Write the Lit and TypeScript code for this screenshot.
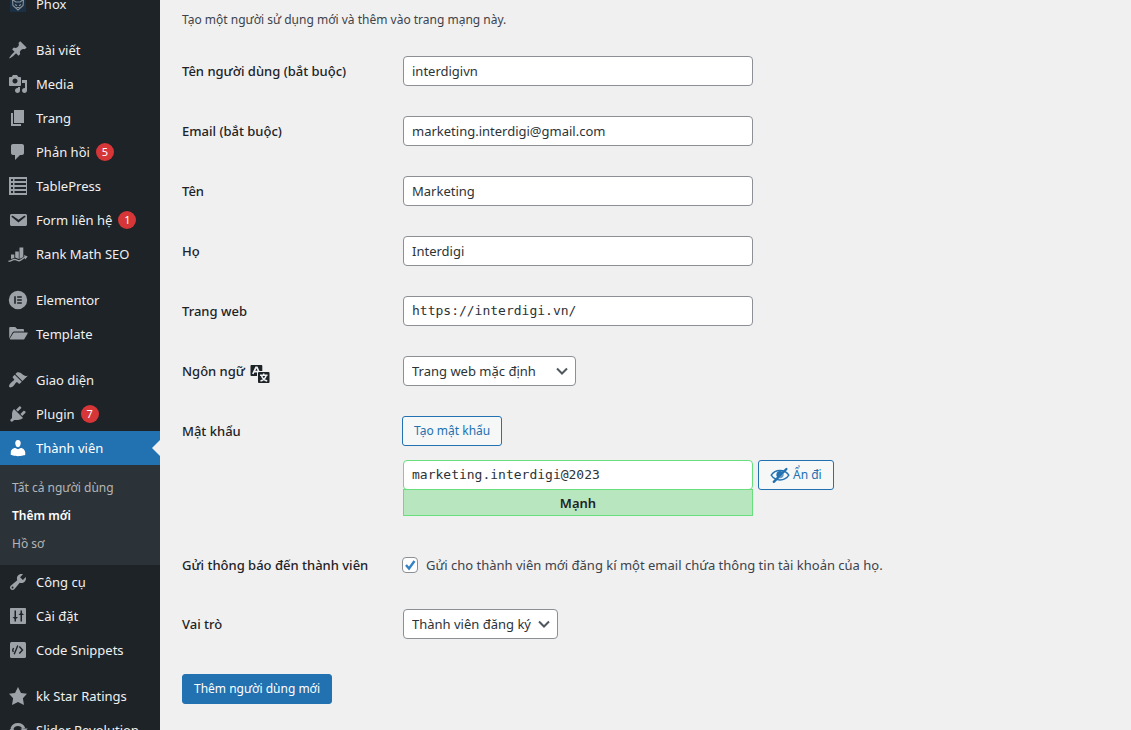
import { LitElement, html, css, svg, nothing } from "lit";
import { customElement, property } from "lit/decorators.js";
import { classMap } from "lit/directives/class-map.js";

const icons: Record<string, unknown> = {
  phox: svg`<rect x="2" y="2" width="16" height="16" fill="#1b3044"/><path fill="none" stroke="#8b9298" stroke-width="1.1" d="M4.5 5.5L7.8 8h4.4l3.3-2.5-.4 6L10 16l-5.100-4.500zM7 10.500l2 1.200M13 10.500l-2 1.200M8.500 13.500h3"/>`,
  pin: svg`<path d="M10.440 3.020l1.820-1.820 6.360 6.350-1.830 1.820c-1.050-.68-2.480-.57-3.410.36l-.75.75c-.92.93-1.040 2.350-.35 3.410l-1.830 1.820-2.410-2.410-2.800 2.790c-.42.42-3.380 2.710-3.800 2.290s1.860-3.390 2.280-3.810l2.790-2.790L4.100 9.360l1.830-1.820c1.050.69 2.480.57 3.400-.36l.75-.75c.93-.92 1.050-2.350.36-3.410z"/>`,
  media: svg`<path d="M13 11V4c0-.55-.45-1-1-1h-1.670L9 1H5L3.670 3H2c-.55 0-1 .45-1 1v7c0 .55.45 1 1 1h10c.55 0 1-.45 1-1zM7 4.500c1.380 0 2.500 1.120 2.500 2.500S8.380 9.500 7 9.500 4.500 8.380 4.500 7 5.620 4.500 7 4.500zM14 6h5v10.500c0 1.380-1.120 2.500-2.500 2.500S14 17.880 14 16.500s1.120-2.500 2.500-2.500c.17 0 .34.02.5.05V9h-3V6zm-4 8.050V13h2v3.500c0 1.380-1.120 2.500-2.500 2.500S7 17.880 7 16.500 8.120 14 9.500 14c.17 0 .34.02.5.05z"/>`,
  page: svg`<path d="M6 15V2h10v13H6zm-1 1h8v2H3V5h2v11z"/>`,
  comment: svg`<path d="M5 2h9c1.100 0 2 .9 2 2v7c0 1.100-.9 2-2 2h-2l-5 5v-5H5c-1.100 0-2-.9-2-2V4c0-1.100.9-2 2-2z"/>`,
  table: svg`<path fill-rule="evenodd" d="M1 1h18v18H1zM3 3v2h2V3zm3.500 0v2H18V3zM3 7v2h2V7zm3.500 0v2H18V7zM3 11v2h2v-2zm3.500 0v2H18v-2zM3 15v2h2v-2zm3.500 0v2H18v-2z"/>`,
  mail: svg`<path d="M3.870 4h13.250C18.370 4 19 4.590 19 5.790v8.420c0 1.190-.63 1.790-1.880 1.790H3.870c-1.250 0-1.880-.6-1.880-1.790V5.790c0-1.200.63-1.790 1.880-1.790zm6.620 8.600l6.740-5.530c.24-.2.43-.66.13-1.070-.29-.41-.82-.42-1.170-.17l-5.700 3.860L4.800 5.830c-.35-.25-.88-.24-1.170.17-.3.41-.11.87.13 1.070z"/>`,
  rank: svg`<path d="M3 10.500h3.300v3.600l-3.300 1zM7.200 7.500h3.600v7.500l-3.600-1.500zM11.500 3.500h3.800V13l-3.800 2z"/><path fill="none" stroke="currentColor" stroke-width="1.400" d="M.5 17.300c2.500-.2 4-1.800 6.200-1.900 1.800 0 2.800 1.400 4.600 1.300 2.400-.3 3.700-3.200 6.700-3.700"/><path d="M16 11l3.700 1.500-2.500 3z"/>`,
  elementor: svg`<path fill-rule="evenodd" d="M10 .8a9.200 9.200 0 1 0 0 18.400A9.200 9.200 0 0 0 10 .8zM6.200 6.200h1.600v7.600H6.200zm3 0h4.600v1.500H9.200zm0 3.050h4.600v1.500H9.200zm0 3.050h4.600v1.500H9.200z"/>`,
  folder: svg`<path d="M1.200 14.500V4.200c0-.7.500-1.200 1.200-1.200h4.800l2 2h5.600c.7 0 1.200.5 1.200 1.200V7.500H6.300c-.8 0-1.400.4-1.800 1z"/><path d="M6.400 8.500h12.700c.5 0 .8.5.5.9l-3.200 5.500c-.2.4-.6.6-1.100.6H2.400c-.5 0-.7-.5-.5-.9l3.400-5.500c.2-.4.6-.6 1.100-.6z"/>`,
  brush: svg`<path d="M14.480 11.060L7.410 3.990l1.500-1.500c.5-.56 2.300-.47 3.510.32 1.210.8 1.430 1.280 2.910 2.100 1.180.64 2.450 1.260 4.450.85zm-.71.71L6.700 4.700 4.930 6.470c-.39.39-.39 1.020 0 1.410l1.060 1.060c.39.39.39 1.030 0 1.420-.6.6-1.430 1.110-2.210 1.690-.35.26-.7.53-1.010.84C1.430 14.230.4 16.080 1.400 17.070c.99 1 2.840-.03 4.180-1.360.31-.31.58-.66.85-1.020.57-.78 1.080-1.610 1.690-2.210.39-.39 1.020-.39 1.410 0l1.060 1.060c.39.39 1.020.39 1.410 0z"/>`,
  plug: svg`<path d="M13.110 4.360L9.870 7.600 8 5.730l3.240-3.240c.35-.34 1.050-.2 1.560.32.52.51.66 1.210.31 1.550zm-8 1.770l.91-1.120 9.010 9.010-1.190.84c-.71.71-2.630 1.160-3.820 1.160H6.140L4.900 17.260c-.59.59-1.540.59-2.120 0-.59-.58-.59-1.530 0-2.120l1.240-1.240v-3.880c0-1.130.4-3.190 1.090-3.890zm7.260 3.970l3.240-3.240c.34-.35 1.040-.21 1.550.31.52.51.66 1.210.31 1.550l-3.240 3.250z"/>`,
  user: svg`<path d="M10 9.250c-2.270 0-2.730-3.440-2.730-3.440C7 4.020 7.820 2 9.970 2c2.160 0 2.980 2.020 2.710 3.810 0 0-.41 3.440-2.680 3.440z"/><path d="M7.230 10.050C4.700 10.050 2.760 12.280 2.760 14.530v2.490s3.590 1.130 7.240 1.130c3.590 0 7.240-1.130 7.240-1.130v-2.490c0-2.200-2.130-4.530-4.520-4.530L10 11.300z"/>`,
  wrench: svg`<path d="M16.680 9.770c-1.340 1.340-3.300 1.670-4.950.99l-5.410 6.520c-.99.99-2.590.99-3.580 0s-.99-2.590 0-3.570l6.520-5.420c-.68-1.650-.35-3.610.99-4.950 1.280-1.280 3.120-1.620 4.720-1.060l-2.890 2.890 2.820 2.820 2.860-2.870c.53 1.580.18 3.390-1.080 4.650zM3.810 16.210c.4.39 1.040.39 1.430 0 .4-.4.4-1.040 0-1.430-.39-.4-1.030-.4-1.430 0-.39.39-.39 1.030 0 1.430z"/>`,
  settings: svg`<path fill-rule="evenodd" d="M18 17V3c0-.55-.45-1-1-1H3c-.55 0-1 .45-1 1v14c0 .55.45 1 1 1h14c.55 0 1-.45 1-1zM6.500 4.500h1.500V11h2l-2 2v2.500H6.500V13l-2-2h2zM12.500 4.500H14V7l2 2h-2v6.500h-1.500V9h-2l2-2z"/>`,
  code: svg`<rect x="2" y="2" width="16" height="16" rx="1.500"/><path fill="none" stroke="#1d2327" stroke-width="1.400" d="M9.800 5.500L6.200 14.300M11.300 6.500l3.200 3.500-3.200 3.500M5.600 8l-.9 2 .6 2"/>`,
  star: svg`<path d="M10 1l3 6 6 .75-4.120 4.620L16 19l-6-3-6 3 1.130-6.630L1 7.750 7 7z"/>`,
  update: svg`<path fill="none" stroke="currentColor" stroke-width="3" d="M4 8.500a6.300 6.300 0 0 1 11.800 0M16 11.500a6.300 6.300 0 0 1-11.800 0"/><path d="M12.500 8.500h7.200l-3.600 4.300zM.3 11.500h7.200L3.900 7.200z"/>`,
  hidden: svg`<path fill="none" stroke="currentColor" stroke-width="1.400" d="M1.200 10.200C3.300 7 6.300 5.500 10 5.500s6.800 1.500 8.800 4.700c-2 3.200-5.100 4.800-8.800 4.800s-6.700-1.600-8.800-4.800z"/><path d="M6.300 9.700A3.700 3.700 0 0 1 12.600 7L7.400 12.300a3.700 3.700 0 0 1-1.100-2.600z"/><path fill-opacity=".7" d="M13.600 8.600a3.700 3.700 0 0 1-4.500 4.600z"/><path stroke="currentColor" stroke-width="2.400" stroke-linecap="round" d="M16.400 4L3.800 16.800"/>`,
  translate: svg`<path d="M1.500 1h9.800c.55 0 1 .45 1 1v5H8.500C7.700 7 7 7.700 7 8.500V12H1.500c-.55 0-1-.45-1-1V2c0-.55.45-1 1-1z"/><path fill="none" stroke="#f0f0f1" stroke-width="1.700" d="M2.800 10L6 3.300h1L9 8M4.500 7.700h3.500"/><rect x="8" y="8" width="11.500" height="11" rx="1"/><path fill="none" stroke="#f0f0f1" stroke-width="1.500" d="M10 11.300h7.500M13.700 9.500v1.800M16.200 11.500c-.8 2.700-2.700 4.700-5.700 5.500M11.500 11.500c.8 2.700 2.700 4.700 5.700 5.500"/>`,
};

@customElement("wp-icon")
class WpIcon extends LitElement {
  @property() name = "";
  static styles = css`
    :host { display: block; width: 20px; height: 20px; flex: none; }
    .glyph { display: block; width: 100%; height: 100%; fill: currentColor; }
  `;
  render() {
    return html`<svg class="glyph" viewBox="0 0 20 20" aria-hidden="true">${icons[this.name]}</svg>`;
  }
}

interface Item { icon: string; label: string; count?: number; current?: boolean; sub?: string[]; }

const groups: Item[][] = [
  [{ icon: "phox", label: "Phox" }],
  [
    { icon: "pin", label: "Bài viết" },
    { icon: "media", label: "Media" },
    { icon: "page", label: "Trang" },
    { icon: "comment", label: "Phản hồi", count: 5 },
    { icon: "table", label: "TablePress" },
    { icon: "mail", label: "Form liên hệ", count: 1 },
    { icon: "rank", label: "Rank Math SEO" },
  ],
  [
    { icon: "elementor", label: "Elementor" },
    { icon: "folder", label: "Template" },
  ],
  [
    { icon: "brush", label: "Giao diện" },
    { icon: "plug", label: "Plugin", count: 7 },
    { icon: "user", label: "Thành viên", current: true, sub: ["Tất cả người dùng", "Thêm mới", "Hồ sơ"] },
    { icon: "wrench", label: "Công cụ" },
    { icon: "settings", label: "Cài đặt" },
    { icon: "code", label: "Code Snippets" },
  ],
  [
    { icon: "star", label: "kk Star Ratings" },
    { icon: "update", label: "Slider Revolution" },
  ],
];

@customElement("wp-menu")
class WpMenu extends LitElement {
  static styles = css`
    :host { display: block; width: 160px; flex: none; overflow: hidden; background: #1d2327; font-size: 13px; line-height: 18px; }
    .menu { display: flex; flex-direction: column; gap: 12px; margin-top: -13px; }
    .group, .sub { list-style: none; margin: 0; padding: 0; }
    .link { display: flex; align-items: center; gap: 8px; height: 34px; padding-left: 8px; color: #f0f0f1; text-decoration: none; white-space: nowrap; position: relative; }
    .icon { color: #9ca2a7; }
    .current { background: #2271b1; color: #fff; }
    .current .icon { color: #fff; }
    .current::after { content: ""; position: absolute; right: 0; top: 9px; border: 8px solid transparent; border-right-color: #f0f0f1; border-left-width: 0; }
    .count { min-width: 18px; height: 18px; margin-left: -2px; border-radius: 9px; background: #d63638; color: #fff; font-size: 11px; text-align: center; }
    .sub { padding: 9px 0 7px; background: #2c3338; }
    .sublink { display: block; padding: 5px 12px; font-size: 12px; color: #b3b6b9; text-decoration: none; }
    .here { color: #fff; font-weight: 600; }
  `;
  render() {
    return html`<nav class="menu" aria-label="Menu">
      ${groups.map((g) => html`<ul class="group">${g.map((i) => html`<li>
        <a href="#" class=${classMap({ link: true, current: !!i.current })}>
          <wp-icon class="icon" name=${i.icon}></wp-icon>
          <span>${i.label}</span>
          ${i.count ? html`<span class="count">${i.count}</span>` : nothing}
        </a>
        ${i.sub ? html`<ul class="sub">${i.sub.map((s, n) => html`<li><a href="#" class=${classMap({ sublink: true, here: n === 1 })}>${s}</a></li>`)}</ul>` : nothing}
      </li>`)}</ul>`)}
    </nav>`;
  }
}

const fields = [
  { id: "user", label: "Tên người dùng", note: " (bắt buộc)", value: "interdigivn", type: "text" },
  { id: "email", label: "Email", note: " (bắt buộc)", value: "marketing.interdigi@gmail.com", type: "email" },
  { id: "first", label: "Tên", note: "", value: "Marketing", type: "text" },
  { id: "last", label: "Họ", note: "", value: "Interdigi", type: "text" },
  { id: "url", label: "Trang web", note: "", value: "https://interdigi.vn/", type: "url" },
];

@customElement("app-root")
class AppRoot extends LitElement {
  static styles = css`
    :host { display: flex; height: 100vh; overflow: hidden; background: #f0f0f1; color: #3c434a; font-family: "Noto Sans", "Open Sans", sans-serif; font-size: 13px; line-height: 20px; }
    .page { flex: 1; min-width: 0; padding: 10px 20px 20px 22px; overflow: hidden; }
    .intro { margin: 0 0 11px; font-size: 12px; }
    .row { display: grid; grid-template-columns: 220px minmax(0, 1fr); padding: 15px 0; }
    .label { display: flex; align-items: center; gap: 5px; height: 30px; color: #1d2327; font-weight: 500; white-space: pre; }
    .label.high { height: 28px; }
    .control { display: flex; flex-direction: column; align-items: flex-start; padding-left: 1px; }
    .text, .select { box-sizing: border-box; height: 30px; margin: 0; border: 1px solid #8c8f94; border-radius: 4px; background: #fff; color: #2c3338; font: inherit; padding: 0 8px; }
    .text { width: 350px; max-width: 100%; }
    .mono { font-family: "DejaVu Sans Mono", monospace; padding-bottom: 2px; }
    .picker { display: grid; align-items: center; }
    .picker > * { grid-area: 1 / 1; }
    .select { appearance: none; padding-right: 24px; }
    .wide { width: 173px; }
    .role { width: 155px; }
    .chevron { justify-self: end; width: 16px; height: 16px; margin-right: 6px; fill: none; stroke: #50575e; stroke-width: 2; pointer-events: none; }
    .button { box-sizing: border-box; display: inline-flex; align-items: center; gap: 3px; height: 30px; padding: 0 11px; border: 1px solid #2271b1; border-radius: 3px; background: #f6f7f7; color: #2271b1; font: inherit; font-size: 12px; white-space: nowrap; }
    .primary { margin-top: 20px; background: #2271b1; color: #fff; }
    .generate { margin-left: -1px; }
    .secret { display: flex; align-items: flex-start; gap: 5px; margin-top: 14px; margin-bottom: 5px; align-self: stretch; }
    .meter { width: 350px; }
    .strong { border-color: #68de7c; width: 100%; display: block; }
    .strength { box-sizing: border-box; height: 27px; margin-top: -1px; padding-top: 3px; border: 1px solid #68de7c; background: #b8e6bf; color: #1d2327; font-weight: 600; text-align: center; }
    .notice { display: flex; align-items: center; gap: 8px; height: 28px; margin-left: -1px; }
    .check { appearance: none; box-sizing: border-box; width: 16px; height: 16px; margin: 0; border: 1px solid #8c8f94; border-radius: 4px; background: #fff; }
    .tick { display: grid; }
    .tick > * { grid-area: 1 / 1; }
    .mark { width: 16px; height: 16px; fill: none; stroke: #3582c4; stroke-width: 2.4; pointer-events: none; }
    .language { color: #1d2327; margin-top: 5px; }
  `;

  private chevron() {
    return html`<svg class="chevron" viewBox="0 0 16 16" aria-hidden="true"><path d="M3 5.500l5 5 5-5"/></svg>`;
  }

  render() {
    return html`
      <wp-menu></wp-menu>
      <main class="page">
        <p class="intro">Tạo một người sử dụng mới và thêm vào trang mạng này.</p>
        <form>
          ${fields.map((f) => html`<div class="row">
            <label class="label" for=${f.id}><span>${f.label}${f.note}</span></label>
            <div class="control"><input id=${f.id} class=${classMap({ text: true, mono: f.type === "url" })} type=${f.type} .value=${f.value}></div>
          </div>`)}
          <div class="row">
            <label class="label" for="locale"><span>Ngôn ngữ</span><wp-icon class="language" name="translate"></wp-icon></label>
            <div class="control"><span class="picker">
              <select id="locale" class="select wide"><option>Trang web mặc định</option></select>${this.chevron()}
            </span></div>
          </div>
          <div class="row">
            <label class="label" for="password">Mật khẩu</label>
            <div class="control">
              <button type="button" class="button generate">Tạo mật khẩu</button>
              <div class="secret">
                <div class="meter">
                  <input id="password" class="text mono strong" type="text" .value=${"marketing.interdigi@2023"}>
                  <div class="strength">Mạnh</div>
                </div>
                <button type="button" class="button"><wp-icon name="hidden"></wp-icon>Ẩn đi</button>
              </div>
            </div>
          </div>
          <div class="row">
            <label class="label high" for="notify">Gửi thông báo đến thành viên</label>
            <div class="control"><div class="notice">
              <span class="tick"><input id="notify" class="check" type="checkbox" checked><svg class="mark" viewBox="0 0 16 16" aria-hidden="true"><path d="M4 8l3 3.500L12.500 4"/></svg></span>
              <label for="notify">Gửi cho thành viên mới đăng kí một email chứa thông tin tài khoản của họ.</label>
            </div></div>
          </div>
          <div class="row">
            <label class="label" for="role">Vai trò</label>
            <div class="control"><span class="picker">
              <select id="role" class="select role"><option>Thành viên đăng ký</option></select>${this.chevron()}
            </span></div>
          </div>
          <button type="button" class="button primary">Thêm người dùng mới</button>
        </form>
      </main>`;
  }
}
